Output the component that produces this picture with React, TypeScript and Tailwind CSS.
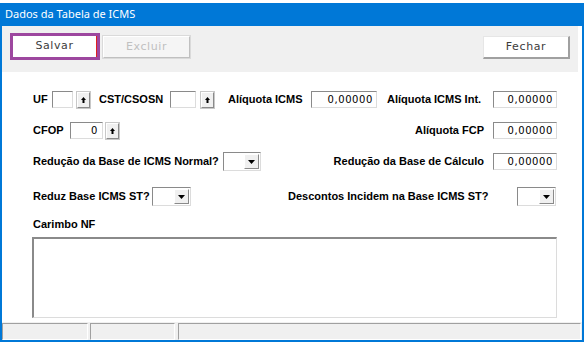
import React from "react";

const lbl = "font-['Liberation_Sans',Arial,sans-serif] font-bold text-[11px] text-black leading-none whitespace-nowrap";
const box =
  "h-[17px] bg-white border border-t-[#8a8a8a] border-l-[#8a8a8a] border-r-[#dcdcdc] border-b-[#dcdcdc] flex items-center justify-end pr-[3px] font-['DejaVu_Sans',sans-serif] text-[10px] tracking-[0.6px] text-black";
const btnText = "font-['DejaVu_Sans',sans-serif] text-[11px] tracking-[0.6px]";

function UpArrow() {
  return (
    <svg width="5" height="6" viewBox="0 0 5 6">
      <polygon points="2.5,0 0,3 5,3" fill="#000" />
      <rect x="1.5" y="3" width="2" height="3" fill="#000" />
    </svg>
  );
}

function Spin() {
  return (
    <div className="ml-[4px] w-[13px] h-[16px] bg-[#f0f0f0] border border-t-white border-l-white border-r-[#8a8a8a] border-b-[#8a8a8a] outline outline-1 outline-[#c8c8c8] flex items-center justify-center">
      <UpArrow />
    </div>
  );
}

function Combo({ w }: { w: string }) {
  return (
    <div className={`${w} h-[19px] bg-white border border-t-[#8a8a8a] border-l-[#8a8a8a] border-r-[#dcdcdc] border-b-[#dcdcdc] flex justify-end p-[1px]`}>
      <div className="w-[15px] h-full bg-[#f0f0f0] border border-t-white border-l-white border-r-[#8a8a8a] border-b-[#8a8a8a] flex items-center justify-center">
        <svg width="7" height="4" viewBox="0 0 7 4">
          <polygon points="0,0 7,0 3.5,4" fill="#000" />
        </svg>
      </div>
    </div>
  );
}

export default function App() {
  return (
    <div className="w-[588px] h-[342px] bg-white pt-[3px]">
      <div className="w-[584px] h-[339px] flex flex-col border-l-2 border-r-2 border-b-2 border-[#0078d7]">
        {/* barra de título */}
        <div className="h-[23px] bg-[#0078d7] flex items-center pl-[3px] font-['Noto_Sans',sans-serif] text-[11px] text-white">
          Dados da Tabela de ICMS
        </div>

        {/* botões */}
        <div className="h-[46px] bg-[#f0f0f0] mr-[4px] flex items-start pt-[7px] pl-[8px] pr-[8px]">
          <div className="w-[90px] h-[27px] border-[3px] border-[#9d479f] bg-white flex">
            <div className={`flex-1 border-r border-[#e02020] flex items-center justify-center ${btnText} text-[#3c3c3c]`}>
              Salvar
            </div>
          </div>
          <div className={`ml-[3px] mt-[3px] w-[87px] h-[22px] bg-[#f5f5f5] border border-t-white border-l-white border-r-[#c0c0c0] border-b-[#c0c0c0] outline outline-1 outline-[#dadada] flex items-center justify-center ${btnText} text-[#c0c0c0]`}>
            Excluir
          </div>
          <div className={`ml-auto mt-[3px] w-[87px] h-[23px] bg-white border border-t-[#e6e6e6] border-l-[#e6e6e6] border-r-[#a0a0a0] border-b-[#a0a0a0] border-r-2 border-b-2 flex items-center justify-center ${btnText} text-[#3c3c3c]`}>
            Fechar
          </div>
        </div>

        {/* formulário */}
        <div className="flex-1 bg-white pt-[19px] pl-[31px] pr-[25px]">
          <div className="flex items-center h-[17px]">
            <span className={`${lbl} w-[19px]`}>UF</span>
            <div className={`${box} w-[21px]`} />
            <Spin />
            <span className={`${lbl} ml-[9px] w-[71px]`}>CST/CSOSN</span>
            <div className={`${box} w-[26px]`} />
            <div className="ml-[1px]">
              <Spin />
            </div>
            <span className={`${lbl} ml-[14px] w-[83px]`}>Alíquota ICMS</span>
            <div className={`${box} w-[66px]`}>0,00000</div>
            <span className={`${lbl} ml-[10px] w-[106px]`}>Alíquota ICMS Int.</span>
            <div className={`${box} w-[64px]`}>0,00000</div>
          </div>

          <div className="flex items-center h-[17px] mt-[14px]">
            <span className={`${lbl} w-[37px]`}>CFOP</span>
            <div className={`${box} w-[33px] pr-[4px]`}>0</div>
            <div className="-ml-[1px]">
              <Spin />
            </div>
            <span className={`${lbl} ml-auto mr-[9px]`}>Alíquota FCP</span>
            <div className={`${box} w-[64px]`}>0,00000</div>
          </div>

          <div className="flex items-center h-[19px] mt-[13px]">
            <span className={`${lbl} w-[190px]`}>Redução da Base de ICMS Normal?</span>
            <Combo w="w-[38px]" />
            <span className={`${lbl} ml-auto mr-[9px]`}>Redução da Base de Cálculo</span>
            <div className={`${box} w-[64px]`}>0,00000</div>
          </div>

          <div className="flex items-center h-[19px] mt-[16px]">
            <span className={`${lbl} w-[119px]`}>Reduz Base ICMS ST?</span>
            <Combo w="w-[39px]" />
            <span className={`${lbl} ml-[97px] w-[229px]`}>Descontos Incidem na Base ICMS ST?</span>
            <Combo w="w-[39px]" />
          </div>

          <div className={`${lbl} mt-[12px] h-[12px] flex items-center`}>Carimbo NF</div>

          <div className="mt-[7px] -ml-[1px] w-[525px] h-[81px] bg-white border-t-2 border-l-2 border-t-[#8a8a8a] border-l-[#8a8a8a] border-r border-b border-r-[#dcdcdc] border-b-[#dcdcdc]" />
        </div>

        {/* barra de status */}
        <div className="h-[18px] bg-[#f0f0f0] flex gap-[2px] pt-[1px] pr-[1px]">
          <div className="w-[86px] h-full border border-t-[#a0a0a0] border-l-[#a0a0a0] border-r-white border-b-white" />
          <div className="w-[85px] h-full border border-t-[#a0a0a0] border-l-[#a0a0a0] border-r-white border-b-white" />
          <div className="flex-1 ml-[1px] h-full border border-t-[#a0a0a0] border-l-[#a0a0a0] border-r-white border-b-white" />
        </div>
      </div>
    </div>
  );
}
